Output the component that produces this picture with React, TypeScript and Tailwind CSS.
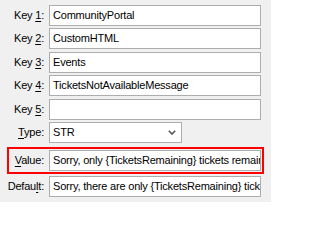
import React from "react"

const font = { fontFamily: '"Liberation Sans", Arial, sans-serif' }

function Label({ pre, mnemonic, post, width }: { pre: string; mnemonic: string; post: string; width: string }) {
  return (
    <div className={`${width} shrink-0 pr-[5px] text-right whitespace-nowrap`}>
      {pre}
      <span className="underline underline-offset-[2px] decoration-1">{mnemonic}</span>
      {post}
    </div>
  )
}

function Field({ value }: { value: string }) {
  return (
    <div className="h-[21px] flex-1 min-w-0 overflow-hidden whitespace-nowrap border border-[#adadad] bg-white pl-[3px] leading-[19px]">
      {value}
    </div>
  )
}

const keys = [
  { n: "1", value: "CommunityPortal", mt: "" },
  { n: "2", value: "CustomHTML", mt: "mt-[2px]" },
  { n: "3", value: "Events", mt: "mt-[3px]" },
  { n: "4", value: "TicketsNotAvailableMessage", mt: "mt-[2px]" },
  { n: "5", value: "", mt: "mt-[3px]" },
]

export default function App() {
  return (
    <div className="w-[271px] h-[202px] overflow-hidden bg-[#f0f0f0] px-[7px] pt-[5px] text-[11px] tracking-[-0.2px] text-black" style={font}>
      {keys.map((k) => (
        <div key={k.n} className={`flex items-center pr-[3px] ${k.mt}`}>
          <Label pre="Key " mnemonic={k.n} post=":" width="w-[42px]" />
          <Field value={k.value} />
        </div>
      ))}

      {/* Type dropdown */}
      <div className="mt-[2px] flex items-center">
        <Label pre="" mnemonic="T" post="ype:" width="w-[42px]" />
        <div className="relative h-[21px] w-[133px] border border-[#adadad] bg-white pl-[3px] leading-[19px]">
          STR
          <svg className="absolute right-[5px] top-[7px]" width="8" height="5" viewBox="0 0 8 5">
            <path d="M0.8 0.8 L4 4 L7.2 0.8" fill="none" stroke="#555" strokeWidth="1.6" />
          </svg>
        </div>
      </div>

      {/* Highlighted value row */}
      <div className="mt-[4px] flex items-center border-2 border-[#ff0000] py-[1px] pr-[1px]">
        <Label pre="" mnemonic="V" post="alue:" width="w-[40px]" />
        <Field value="Sorry, only {TicketsRemaining} tickets remaining." />
      </div>

      <div className="mt-[2px] flex items-center pr-[3px]">
        <Label pre="Defau" mnemonic="l" post="t:" width="w-[42px]" />
        <Field value="Sorry, there are only {TicketsRemaining} tickets remaining." />
      </div>
    </div>
  )
}
